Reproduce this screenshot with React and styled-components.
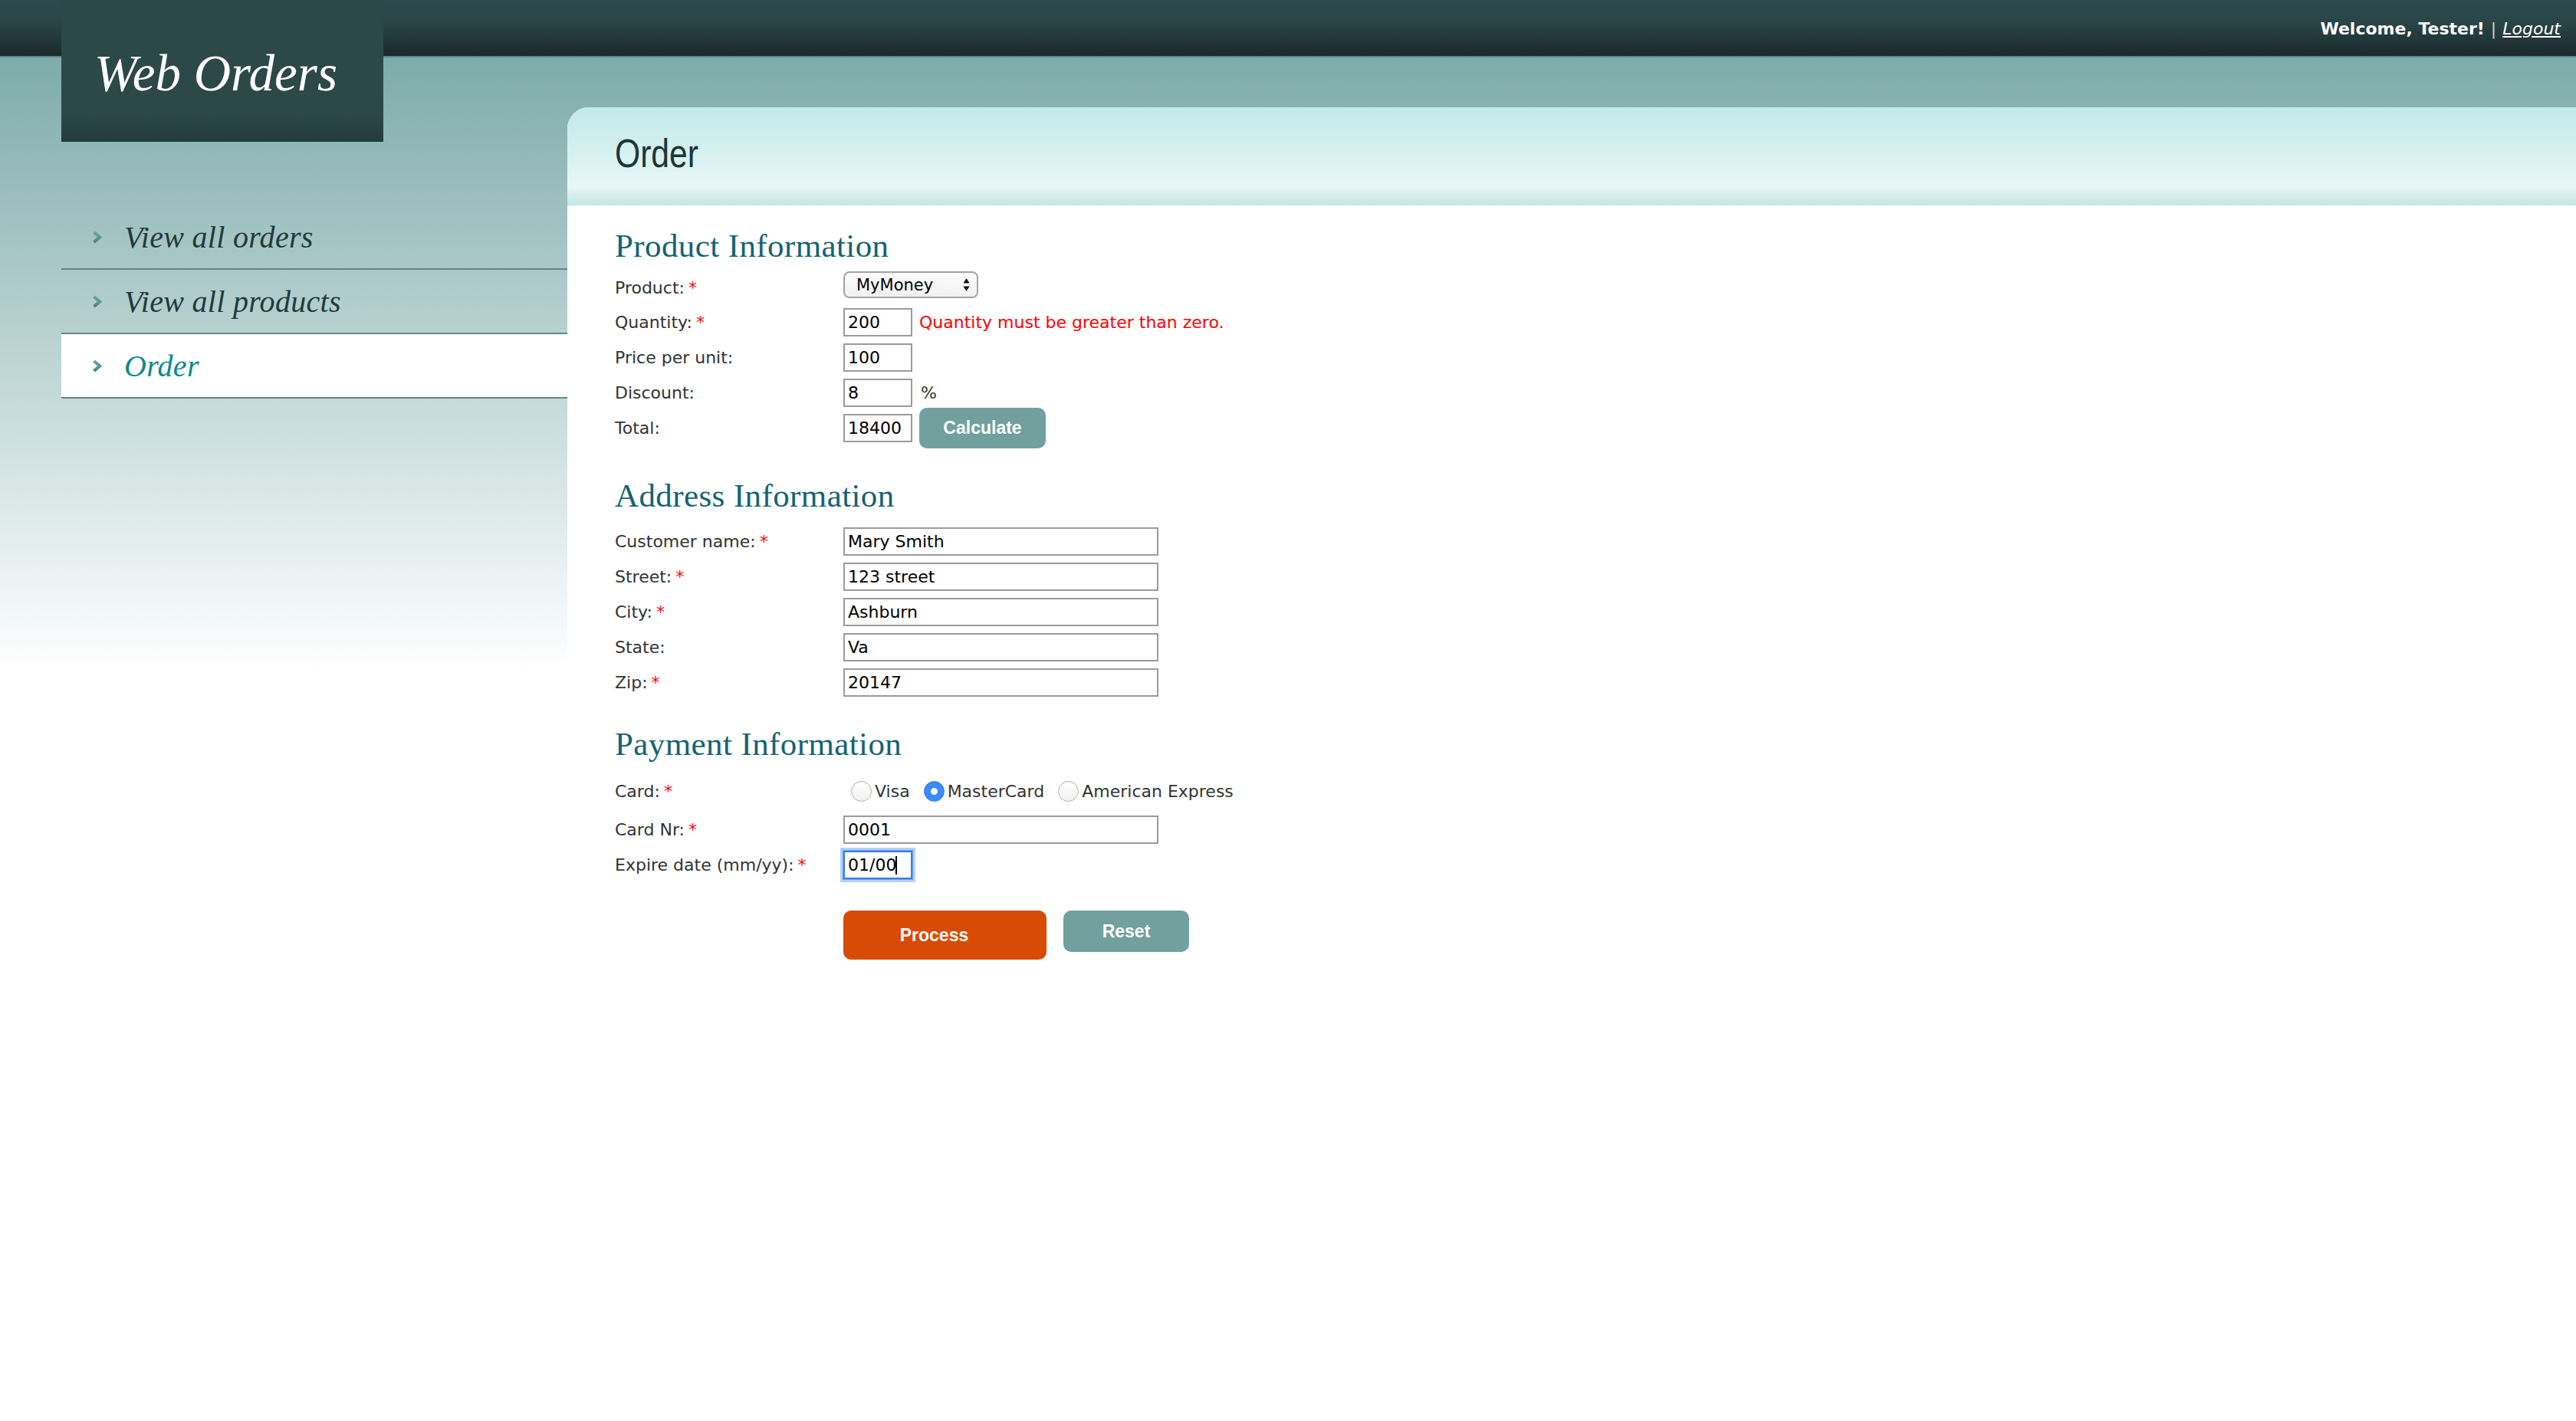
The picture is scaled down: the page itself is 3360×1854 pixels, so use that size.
import React from 'react';
import styled, { createGlobalStyle } from 'styled-components';

const GlobalStyle = createGlobalStyle`
  html, body { margin: 0; padding: 0; }
  body { background: #ffffff; font-family: "DejaVu Sans", Verdana, sans-serif; }
  * { box-sizing: border-box; }
`;

const Page = styled.div`
  min-height: 1854px;
  display: flex;
  flex-direction: column;
  background: linear-gradient(to bottom, #7eabab 75px, #ffffff 875px) no-repeat;
`;

const TopBar = styled.header`
  position: relative;
  height: 75px;
  flex-shrink: 0;
  background: linear-gradient(to bottom, #2d4a4c 0%, #2a4547 40%, #1b292d 100%);
  border-bottom: 2px solid #5e8888;
  display: flex;
  justify-content: flex-end;
  align-items: flex-start;
  padding: 25px 20px 0 0;
  font-family: "DejaVu Sans", Verdana, sans-serif;
  font-size: 22px;
  line-height: 26px;
  color: #ffffff;
`;

const Welcome = styled.span`
  font-weight: bold;
  font-size: 22px;
`;

const Sep = styled.span`
  color: #c9d3d3;
  margin: 0 8px;
`;

const LogoutLink = styled.a`
  color: #ffffff;
  font-style: italic;
  text-decoration: underline;
  cursor: pointer;
`;

const LogoBox = styled.div`
  position: absolute;
  left: 80px;
  top: 0;
  width: 420px;
  height: 185px;
  z-index: 2;
  background: linear-gradient(to bottom, #2c4849 0%, #2c4849 80%, #233b3d 100%);
  padding: 62px 0 0 43px;
`;

const LogoText = styled.h1`
  margin: 0;
  font-family: "Liberation Serif", "Times New Roman", serif;
  font-style: italic;
  font-weight: normal;
  font-size: 67px;
  line-height: 67px;
  color: #ffffff;
  white-space: nowrap;
`;

const Body = styled.div`
  display: flex;
  flex: 1;
`;

const Sidebar = styled.nav`
  width: 740px;
  flex-shrink: 0;
  padding: 193px 0 0 80px;
`;

const Menu = styled.ul`
  list-style: none;
  margin: 0;
  padding: 0;
`;

const MenuItem = styled.li`
  height: 84px;
  border-bottom: 2px solid #5f8687;
  background: ${p => (p.$active ? '#ffffff' : 'transparent')};
  display: flex;
  align-items: center;
  padding-left: 40px;
  gap: 29px;
`;

const Chevron = styled.svg`
  width: 13px;
  height: 17px;
  flex-shrink: 0;
`;

const MenuLink = styled.a`
  font-family: "Liberation Serif", "Times New Roman", serif;
  font-style: italic;
  font-size: 40px;
  letter-spacing: 0.3px;
  color: ${p => (p.$active ? '#0b8a8a' : '#1f3a3b')};
  text-decoration: none;
  cursor: pointer;
  white-space: nowrap;
`;

const Main = styled.main`
  flex: 1;
  padding-top: 65px;
  display: flex;
  flex-direction: column;
`;

const Panel = styled.section`
  flex: 1;
  background: #ffffff;
  border-top-left-radius: 28px;
  overflow: hidden;
`;

const PanelHeader = styled.div`
  height: 128px;
  padding: 34px 0 0 62px;
  background: linear-gradient(to bottom, #c3e9e9 0%, #d6f0f0 45%, #e9f7f7 80%, #c3e5e5 100%);
`;

const PanelTitle = styled.h2`
  display: inline-block;
  margin: 0;
  font-family: "Liberation Sans", Arial, sans-serif;
  font-weight: normal;
  font-size: 52px;
  line-height: 52px;
  color: #1d3637;
  transform: scaleX(0.82);
  transform-origin: left center;
`;

const PanelBody = styled.div`
  padding: 0 62px 80px 62px;
`;

const SectionHeading = styled.h3`
  margin: ${p => p.$mt}px 0 0 0;
  font-family: "Liberation Serif", "Times New Roman", serif;
  font-weight: normal;
  font-size: 43px;
  line-height: 43px;
  letter-spacing: 0.4px;
  color: #146372;
`;

const Row = styled.div`
  display: flex;
  align-items: ${p => p.$align || 'center'};
  height: 37px;
  margin-top: ${p => p.$mt}px;
  font-size: 22px;
  color: #333333;
`;

const Label = styled.label`
  width: 298px;
  flex-shrink: 0;
  line-height: 27px;
  color: #333333;
  white-space: nowrap;
`;

const Req = styled.span`
  color: #ff0000;
  margin-left: 5px;
`;

const TextInput = styled.input`
  width: ${p => p.$w}px;
  height: 37px;
  padding: 0 4px;
  border: 2px solid ${p => (p.$focused ? '#3b7ddd' : '#9b9b9b')};
  box-shadow: ${p => (p.$focused ? '0 0 0 1px #6ea2ee, 0 0 0 4px rgba(120, 170, 245, 0.55)' : 'none')};
  border-radius: 0;
  background: #ffffff;
  font-family: "DejaVu Sans", Verdana, sans-serif;
  font-size: 22px;
  color: #000000;
  outline: none;
`;

const FieldWrap = styled.div`
  position: relative;
  display: flex;
`;

const Caret = styled.span`
  position: absolute;
  left: ${p => p.$x}px;
  top: 7px;
  width: 2px;
  height: 24px;
  background: #000000;
`;

const SelectWrap = styled.div`
  position: relative;
  width: 176px;
  height: 35px;
`;

const Select = styled.select`
  appearance: none;
  -webkit-appearance: none;
  width: 100%;
  height: 100%;
  border: 2px solid #a3a3a3;
  border-radius: 8px;
  background: linear-gradient(to bottom, #fcfcfc, #f1f1f1);
  padding: 0 0 0 15px;
  font-family: "DejaVu Sans", Verdana, sans-serif;
  font-size: 21px;
  color: #000000;
  outline: none;
`;

const SelectArrows = styled.svg`
  position: absolute;
  right: 11px;
  top: 8px;
  width: 9px;
  height: 19px;
  pointer-events: none;
`;

const ErrorText = styled.span`
  margin-left: 9px;
  color: #ff0000;
  white-space: nowrap;
`;

const Unit = styled.span`
  margin-left: 11px;
  color: #333333;
`;

const Button = styled.button`
  width: ${p => p.$w}px;
  height: ${p => p.$h}px;
  margin-left: ${p => p.$ml || 0}px;
  padding: 0 ${p => p.$pr || 0}px 0 0;
  flex-shrink: 0;
  border: none;
  border-radius: 10px;
  background: ${p => p.$bg};
  color: #ffffff;
  font-family: "Liberation Sans", Arial, sans-serif;
  font-weight: bold;
  font-size: 23px;
  cursor: pointer;
`;

const RadioGroup = styled.div`
  display: flex;
  align-items: center;
  gap: 8px;
`;

const RadioOption = styled.label`
  display: flex;
  align-items: center;
  color: #333333;
  white-space: nowrap;
`;

const Radio = styled.input`
  appearance: none;
  -webkit-appearance: none;
  width: 27px;
  height: 27px;
  margin: 0 4px 0 10px;
  border-radius: 50%;
  border: 1px solid #b3b3b3;
  background: linear-gradient(to bottom, #ffffff, #f0f0f0);
  box-shadow: inset 0 1px 1px rgba(0, 0, 0, 0.05);
  &:checked {
    border-color: #2f7fe9;
    background: radial-gradient(circle, #ffffff 0, #ffffff 4px, #3b8cf6 5px);
  }
`;

const ButtonRow = styled.div`
  display: flex;
  align-items: flex-start;
  margin-top: 41px;
  padding-left: 298px;
`;

const menuItems = [
  { label: 'View all orders' },
  { label: 'View all products' },
  { label: 'Order', active: true },
];

function ChevronIcon() {
  return (
    <Chevron viewBox="0 0 13 17">
      <defs>
        <linearGradient id="chev" x1="0" y1="0" x2="0" y2="1">
          <stop offset="0" stopColor="#6aa5a5" />
          <stop offset="1" stopColor="#4c8485" />
        </linearGradient>
      </defs>
      <polyline points="2.5,2 10,8.5 2.5,15" fill="none" stroke="url(#chev)" strokeWidth="4.2" />
    </Chevron>
  );
}

export default function App() {
  return (
    <>
      <GlobalStyle />
      <Page>
        <TopBar>
          <LogoBox>
            <LogoText>Web Orders</LogoText>
          </LogoBox>
          <Welcome>Welcome, Tester!</Welcome>
          <Sep>|</Sep>
          <LogoutLink>Logout</LogoutLink>
        </TopBar>
        <Body>
          <Sidebar>
            <Menu>
              {menuItems.map(item => (
                <MenuItem key={item.label} $active={item.active}>
                  <ChevronIcon />
                  <MenuLink $active={item.active}>{item.label}</MenuLink>
                </MenuItem>
              ))}
            </Menu>
          </Sidebar>
          <Main>
            <Panel>
              <PanelHeader>
                <PanelTitle>Order</PanelTitle>
              </PanelHeader>
              <PanelBody>
                <SectionHeading $mt={31}>Product Information</SectionHeading>
                <Row $mt={10} $align="flex-end">
                  <Label>Product:<Req>*</Req></Label>
                  <SelectWrap>
                    <Select defaultValue="MyMoney">
                      <option>MyMoney</option>
                      <option>FamilyAlbum</option>
                      <option>ScreenSaver</option>
                    </Select>
                    <SelectArrows viewBox="0 0 9 19">
                      <polygon points="4.5,1 8.5,7.5 0.5,7.5" fill="#111" />
                      <polygon points="0.5,11.5 8.5,11.5 4.5,18" fill="#111" />
                    </SelectArrows>
                  </SelectWrap>
                </Row>
                <Row $mt={13}>
                  <Label>Quantity:<Req>*</Req></Label>
                  <TextInput $w={90} defaultValue="200" />
                  <ErrorText>Quantity must be greater than zero.</ErrorText>
                </Row>
                <Row $mt={9}>
                  <Label>Price per unit:</Label>
                  <TextInput $w={90} defaultValue="100" />
                </Row>
                <Row $mt={9}>
                  <Label>Discount:</Label>
                  <TextInput $w={90} defaultValue="8" />
                  <Unit>%</Unit>
                </Row>
                <Row $mt={9}>
                  <Label>Total:</Label>
                  <TextInput $w={90} defaultValue="18400" />
                  <Button $w={165} $h={53} $ml={9} $bg="#72a09f">Calculate</Button>
                </Row>

                <SectionHeading $mt={48}>Address Information</SectionHeading>
                <Row $mt={20}>
                  <Label>Customer name:<Req>*</Req></Label>
                  <TextInput $w={411} defaultValue="Mary Smith" />
                </Row>
                <Row $mt={9}>
                  <Label>Street:<Req>*</Req></Label>
                  <TextInput $w={411} defaultValue="123 street" />
                </Row>
                <Row $mt={9}>
                  <Label>City:<Req>*</Req></Label>
                  <TextInput $w={411} defaultValue="Ashburn" />
                </Row>
                <Row $mt={9}>
                  <Label>State:</Label>
                  <TextInput $w={411} defaultValue="Va" />
                </Row>
                <Row $mt={9}>
                  <Label>Zip:<Req>*</Req></Label>
                  <TextInput $w={411} defaultValue="20147" />
                </Row>

                <SectionHeading $mt={40}>Payment Information</SectionHeading>
                <Row $mt={22}>
                  <Label>Card:<Req>*</Req></Label>
                  <RadioGroup>
                    <RadioOption><Radio type="radio" name="card" />Visa</RadioOption>
                    <RadioOption><Radio type="radio" name="card" defaultChecked />MasterCard</RadioOption>
                    <RadioOption><Radio type="radio" name="card" />American Express</RadioOption>
                  </RadioGroup>
                </Row>
                <Row $mt={13}>
                  <Label>Card Nr:<Req>*</Req></Label>
                  <TextInput $w={411} defaultValue="0001" />
                </Row>
                <Row $mt={9}>
                  <Label>Expire date (mm/yy):<Req>*</Req></Label>
                  <FieldWrap>
                    <TextInput $w={90} $focused defaultValue="01/00" />
                    <Caret $x={68} />
                  </FieldWrap>
                </Row>
                <ButtonRow>
                  <Button $w={265} $h={64} $pr={28} $bg="#d84b05">Process</Button>
                  <Button $w={164} $h={54} $ml={22} $bg="#72a09f">Reset</Button>
                </ButtonRow>
              </PanelBody>
            </Panel>
          </Main>
        </Body>
      </Page>
    </>
  );
}
